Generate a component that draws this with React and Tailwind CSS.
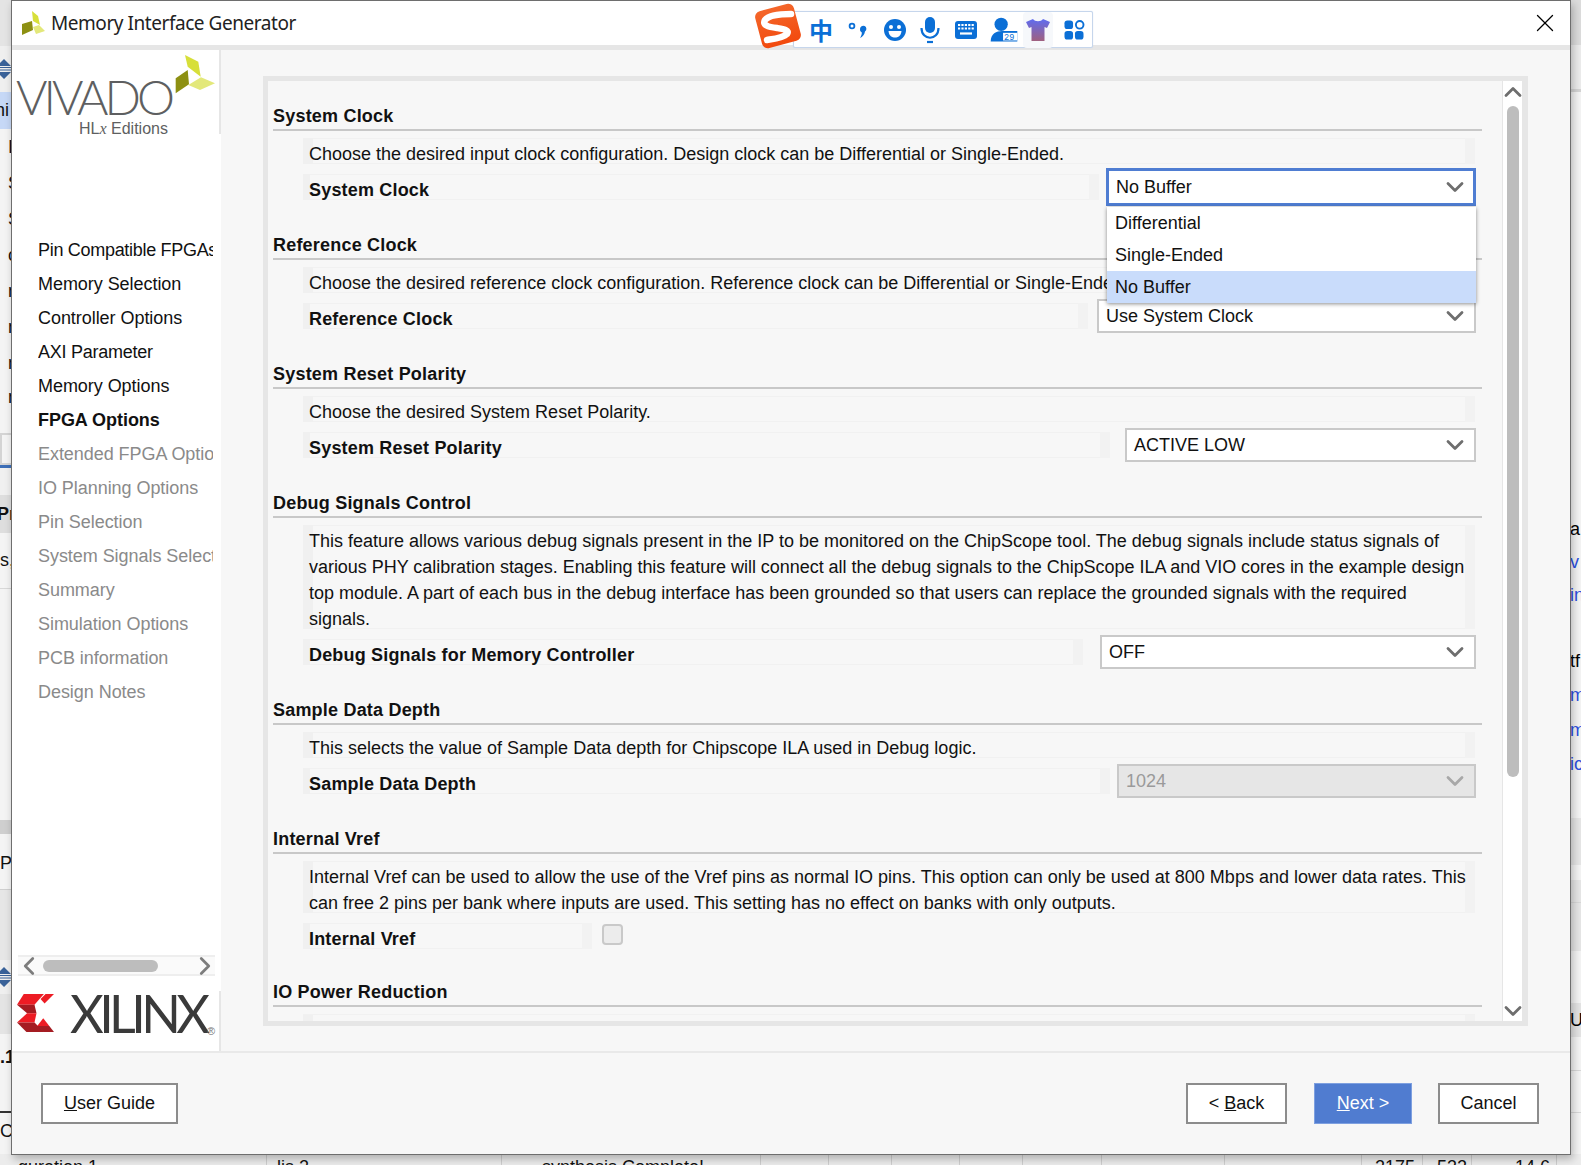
import React from 'react';
import { ChevronDown, ChevronUp, ChevronLeft, ChevronRight, X } from 'lucide-react';

const NAV = [
    ['Pin Compatible FPGAs', 'tracking-[-0.3px]'],
    ['Memory Selection', ''],
    ['Controller Options', ''],
    ['AXI Parameter', 'tracking-[-0.25px]'],
    ['Memory Options', ''],
    ['FPGA Options', 'font-bold'],
    ['Extended FPGA Options', 'text-[#8a8a8a]'],
    ['IO Planning Options', 'text-[#8a8a8a]'],
    ['Pin Selection', 'text-[#8a8a8a]'],
    ['System Signals Selection', 'text-[#8a8a8a]'],
    ['Summary', 'text-[#8a8a8a]'],
    ['Simulation Options', 'text-[#8a8a8a]'],
    ['PCB information', 'text-[#8a8a8a]'],
    ['Design Notes', 'text-[#8a8a8a]'],
];

const LEFT_STRIP = [
    ['h-[46px] bg-[#e4e4e4]', ''],
    ['h-[46px] bg-[#efefef]', '', 'diamond'],
    ['h-[37px] bg-[#c6d8f6] indent-[-5px]', 'hi'],
    ['h-[36px] pl-[8px]', 'I'],
    ['h-[36px] pl-[8px]', 'S'],
    ['h-[36px] pl-[8px]', 'S'],
    ['h-[36px] pl-[8px]', 'c'],
    ['h-[36px] pl-[8px]', 'r'],
    ['h-[36px] pl-[8px]', 'r'],
    ['h-[36px] pl-[8px]', 'r'],
    ['h-[32px] pl-[8px]', 'r'],
    ['h-[20px]', ''],
    ['h-[32px] border-y-2 border-l-2 border-[#d4d4d4]', ''],
    ['h-[3px] bg-[#3d6fb8]', ''],
    ['h-[27px] bg-[#f0f0f0]', ''],
    ['h-[38px] bg-[#dedede] font-bold indent-[-3px]', 'Pr'],
    ['h-[56px] border-b border-[#d8d8d8]', 's,'],
    ['h-[231px]', ''],
    ['h-[14px] bg-[#cfcfcf]', ''],
    ['h-[56px] pt-[4px] border-b border-[#cfcfcf]', 'P'],
    ['h-[70px] bg-[#e6e6e6]', ''],
    ['h-[34px] bg-[#efefef]', '', 'diamond'],
    ['h-[40px] bg-[#e4e4e4]', ''],
    ['h-[46px] font-bold', '.1'],
    ['h-[33px] border-b-2 border-[#333]', ''],
    ['h-[36px]', 'C'],
];

const RIGHT_STRIP = [
    ['h-[45px] bg-[#dcdcdc]', ''],
    ['h-[44px] bg-[#ececec]', ''],
    ['h-[3px] bg-[#d4d4d4]', ''],
    ['h-[420px]', ''],
    ['h-[34px] text-black', 'a'],
    ['h-[32px] text-[#2b4fe0]', 'v'],
    ['h-[34px] text-[#2b4fe0]', 'in'],
    ['h-[32px]', ''],
    ['h-[34px] text-black', 'tf'],
    ['h-[35px] text-[#2b4fe0]', 'm'],
    ['h-[34px] text-[#2b4fe0]', 'm'],
    ['h-[34px] text-[#2b4fe0]', 'ic'],
    ['h-[37px]', ''],
    ['h-[47px] bg-[#e6e6e6]', ''],
    ['h-[15px]', ''],
    ['h-[23px] bg-[#e6e6e6] border-b border-[#d8d8d8]', ''],
    ['h-[48px] bg-[#e6e6e6]', ''],
    ['h-[52px]', ''],
    ['h-[34px] bg-[#e4e4e4] text-black', 'U'],
    ['h-[34px] border-b border-[#d8d8d8]', ''],
    ['h-[42px] border-b border-[#d8d8d8]', ''],
];

const BOTTOM_CELLS = [
    ['w-[267px] pl-[18px]', 'guration 1'],
    ['w-[235px] pl-[10px]', 'lis 2'],
    ['w-[259px] pl-[40px]', 'synthesis Complete!'],
    ['w-[68px]', ''],
    ['w-[63px]', ''],
    ['w-[68px]', ''],
    ['w-[63px]', ''],
    ['w-[79px]', ''],
    ['w-[123px]', ''],
    ['w-[137px]', ''],
    ['w-[61px] pl-[13px]', '2175'],
    ['w-[49px] pl-[14px]', '532'],
    ['w-[85px] pl-[43px]', '14.6'],
];

function Diamond() {
    return (
        <svg width="14" height="20" viewBox="0 0 14 20" className="ml-[-3px]">
            <path d="M7 0 L14 7 H0 Z M0 13 H14 L7 20 Z" fill="#3a6299" />
            <path d="M0 8.5 H14 M0 11 H14" stroke="#3a6299" strokeWidth="1.2" />
        </svg>
    );
}

function Strip({ rows }) {
    return (
        <div className="flex flex-col w-[11px] overflow-hidden">
            {rows.map(([cls, text, extra], i) => (
                <div key={i} className={`${cls} shrink-0 overflow-hidden flex items-center whitespace-nowrap`}>
                    {extra === 'diamond' ? <Diamond /> : text}
                </div>
            ))}
        </div>
    );
}

function VivadoMark() {
    return (
        <svg width="41" height="39" viewBox="0 0 41 39" className="absolute left-[163px] top-[5px]">
            <polygon points="10,0 23.3,6.7 25.7,21.7 12.7,11.7" fill="#d7df3a" />
            <polygon points="12.7,15 14,29.3 0.7,38.3 0.7,23.3" fill="#8d9012" />
            <polygon points="26,22.3 40,28.3 25,35 13.3,30" fill="#e3e87a" />
        </svg>
    );
}

function XilinxMark() {
    return (
        <svg width="37" height="38" viewBox="0 0 110 113" className="shrink-0">
            <polygon points="20,0 80,0 52,32 0,32" fill="#ed1c24" />
            <polygon points="0,32 52,32 58,57 30,57" fill="#a51c22" />
            <polygon points="30,57 58,57 52,85 0,85" fill="#ed1c24" />
            <polygon points="0,85 52,85 80,113 28,113" fill="#a51c22" />
            <polygon points="85,0 110,0 82,28 70,15" fill="#ed1c24" />
            <polygon points="78,72 96,95 60,95" fill="#ed1c24" />
            <polygon points="60,95 96,95 110,113 78,113" fill="#a51c22" />
        </svg>
    );
}

function Sogou() {
    return (
        <div className="absolute left-[793px] top-[11px] w-[300px] h-[37px] bg-white border border-[#c6d6ec] rounded-[2px] flex items-center text-[#0b6fd6] shadow-[0_0_1px_#c6d6ec]">
            <div className="w-[9px] shrink-0" />
            <span className="w-[36px] shrink-0 text-center text-[24px] leading-none font-bold font-['Noto_Sans_CJK_SC',sans-serif]">中</span>
            <svg width="36" height="26" viewBox="0 0 36 26" className="shrink-0 ml-[3px]">
                <circle cx="10" cy="9" r="2.4" fill="none" stroke="#0b6fd6" strokeWidth="1.8" />
                <path d="M18 12 a3.2 3.2 0 1 1 5 2.6 c-0.5 3 -2.5 5.5 -5 6.5 c1 -2 2 -3.5 1.8 -5.6 a3.2 3.2 0 0 1 -1.8 -3.5 z" fill="#0b6fd6" />
            </svg>
            <svg width="36" height="26" viewBox="0 0 26 26" className="shrink-0 -ml-[1px]">
                <circle cx="13" cy="13" r="11" fill="#0b6fd6" />
                <circle cx="9" cy="10" r="2" fill="#fff" />
                <circle cx="17" cy="10" r="2" fill="#fff" />
                <path d="M6.5 14 H19.5 C19 19 16 20.5 13 20.5 C10 20.5 7 19 6.5 14 Z" fill="#fff" />
            </svg>
            <svg width="36" height="28" viewBox="0 0 36 28" className="shrink-0 -ml-[1px]">
                <rect x="13" y="1" width="10" height="16" rx="5" fill="#0b6fd6" />
                <path d="M9.5 12 C9.5 25 26.5 25 26.5 12" fill="none" stroke="#0b6fd6" strokeWidth="2.2" />
                <path d="M15 26 H21" stroke="#0b6fd6" strokeWidth="2.2" />
            </svg>
            <svg width="38" height="24" viewBox="0 0 38 24" className="shrink-0 -ml-[1px]">
                <rect x="8" y="3" width="22" height="18" rx="3" fill="#0b6fd6" />
                <path d="M11 7 H27 M11 10.5 H27" stroke="#fff" strokeWidth="2" strokeDasharray="2.2 1.2" />
                <path d="M13 15.5 H25" stroke="#fff" strokeWidth="2.2" />
            </svg>
            <svg width="38" height="30" viewBox="0 0 40 30" className="shrink-0">
                <circle cx="17" cy="9" r="7" fill="#0b6fd6" />
                <path d="M6 27 C6 19 12 16 18 16 H34 V27 Z" fill="#0b6fd6" />
                <rect x="19" y="18" width="15" height="8" fill="#fff" />
                <text x="20" y="25.5" fontSize="9" fontFamily="Liberation Mono, monospace" fill="#0b6fd6">29</text>
            </svg>
            <div className="w-[30px] h-[36px] shrink-0 flex items-center justify-center bg-[#f6f8fb] rounded-[4px]">
                <svg width="24" height="22" viewBox="0 0 24 22">
                    <defs>
                        <linearGradient id="shirt" x1="0" y1="0" x2="0" y2="1">
                            <stop offset="0" stopColor="#5f6cf0" />
                            <stop offset="1" stopColor="#a0607f" />
                        </linearGradient>
                    </defs>
                    <path d="M7 0 C9 3 15 3 17 0 L24 3 L21 9 L18.5 8 V22 H5.5 V8 L3 9 L0 3 Z" fill="url(#shirt)" />
                </svg>
            </div>
            <svg width="38" height="24" viewBox="0 0 40 24" className="shrink-0 ml-[2px]">
                <rect x="10" y="2" width="9" height="9" rx="3" fill="#0b6fd6" />
                <rect x="22" y="2.5" width="8" height="8" rx="4" fill="none" stroke="#0b6fd6" strokeWidth="2" />
                <rect x="10" y="13" width="9" height="9" rx="3" fill="#0b6fd6" />
                <rect x="21" y="13" width="9" height="9" rx="3" fill="#0b6fd6" />
            </svg>
        </div>
    );
}

function SogouLogo() {
    return (
        <svg width="52" height="50" viewBox="0 0 52 50" className="absolute left-[753px] top-[1px]">
            <defs>
                <linearGradient id="sg" x1="0" y1="0" x2="0" y2="1">
                    <stop offset="0" stopColor="#f4662a" />
                    <stop offset="1" stopColor="#f24a0e" />
                </linearGradient>
            </defs>
            <rect x="5" y="6" width="40" height="38" rx="6" fill="url(#sg)" transform="rotate(-15 25 25)" />
            <path d="M38 13 C28 13 16 14 12 19 C9 24 15 26 24 27 C30 28 37 29 34 33 C30 37 20 38 14 39" fill="none" stroke="#fff" strokeWidth="6.5" strokeLinecap="round" />
        </svg>
    );
}

function Select({ value, width, disabled }) {
    return (
        <div className={`${width} h-[34px] -my-[4px] shrink-0 flex items-center justify-between pl-[7px] pr-[5px] border-2 border-[#c9c9c9] ${disabled ? 'bg-[#e6e6e6] text-[#9a9a9a]' : 'bg-white'}`}>
            <span>{value}</span>
            <ChevronDown size={28} strokeWidth={2.4} className={disabled ? 'text-[#a8a8a8]' : 'text-[#6e6e6e]'} />
        </div>
    );
}

function Row({ className, swatch, children }) {
    return (
        <div className={`relative flex-1 min-w-0 shadow-[inset_0_1px_0_#f1f1f1,inset_0_-1px_0_#f1f1f1] ${className}`}>
            <div className={`absolute left-0 inset-y-0 ${swatch} bg-[#f0f0f0]`} />
            <div className="absolute right-0 inset-y-0 w-[10px] bg-[#f2f2f2]" />
            {children}
        </div>
    );
}

function Section({ title, desc, label, control, gap }) {
    return (
        <section className="pb-[30px]">
            <h3 className="h-[30px] border-b-2 border-[#c8c8c8] font-bold leading-[30px] tracking-[0.2px] mr-[20px]">{title}</h3>
            <div className="ml-[30px] mr-[27px] mt-[7px] flex">
                <Row swatch="w-[10px]" className="pl-[6px] leading-[26px]">
                    {desc.map((line, i) => <div key={i} className="relative top-[3px] whitespace-nowrap h-[26px]">{line}</div>)}
                </Row>
            </div>
            <div className={`ml-[30px] mr-[26px] mt-[10px] flex items-center ${gap}`}>
                <Row swatch="w-[7px]" className="pl-[6px] h-[26px] leading-[33px] font-bold tracking-[0.18px]">
                    <span className="relative">{label}</span>
                </Row>
                {control}
            </div>
        </section>
    );
}

function Btn({ className = '', children }) {
    return (
        <div className={`h-[41px] flex items-center justify-center border-2 border-[#8c8c8c] bg-white ${className}`}>
            {children}
        </div>
    );
}

export default function App() {
    return (
        <div className="relative w-[1581px] h-[1165px] overflow-hidden bg-[#f4f4f4] text-[18px] text-[#111] font-['Liberation_Sans',Arial,sans-serif]">
            {/* window behind the dialog */}
            <div className="absolute inset-0 flex justify-between">
                <Strip rows={LEFT_STRIP} />
                <Strip rows={RIGHT_STRIP} />
            </div>
            <div className="absolute left-0 right-0 bottom-0 h-[11px] flex bg-[#ececec] overflow-hidden">
                {BOTTOM_CELLS.map(([w, t], i) => (
                    <div key={i} className={`${w} shrink-0 border-r border-[#cfcfcf] leading-[27px] whitespace-nowrap`}>{t}</div>
                ))}
            </div>

            {/* dialog */}
            <div className="absolute left-[11px] top-0 w-[1560px] h-[1155px] flex flex-col bg-[#f7f7f7] border border-[#6e6e6e] shadow-[2px_4px_8px_rgba(0,0,0,0.25)]">
                <div className="h-[44px] shrink-0 bg-white flex items-center pl-[9px] pr-[10px] text-[19px] tracking-[-0.45px] text-[#222] font-['Noto_Sans',sans-serif]">
                    <svg width="24" height="24" viewBox="0 0 24 24" className="shrink-0">
                        <polygon points="11,0 17,5 19,14 12,10" fill="#d7df3a" />
                        <polygon points="1,13 11,10 12,19 1,24" fill="#8d9012" />
                        <polygon points="12,16 18,14 24,20 15,23" fill="#e3e87a" />
                    </svg>
                    <span className="ml-[6px] flex-1">Memory Interface Generator</span>
                    <X size={30} strokeWidth={1} className="text-black" />
                </div>
                <div className="h-[5px] shrink-0 bg-[#e6e6e6]" />

                <div className="flex-1 min-h-0 flex">
                    {/* wizard sidebar */}
                    <aside className="w-[209px] shrink-0 bg-white flex flex-col">
                        <div className="relative h-[84px] shrink-0 border-r-2 border-[#e6e6e6] overflow-visible">
                            <span className="absolute left-[4px] top-[19px] text-[48px] leading-[56px] tracking-[-4px] font-light text-[#5e5f61] font-['Lato',sans-serif]">VIVADO</span>
                            <VivadoMark />
                            <span className="absolute left-[67px] top-[69px] text-[16px] leading-[20px] text-[#5e5f61]">HL<i className="font-['Liberation_Serif',serif]">x</i> Editions</span>
                        </div>
                        <nav className="flex-1 min-h-0 pt-[99px] pl-[26px] pr-[8px] overflow-hidden tracking-[-0.05px]">
                            {NAV.map(([name, cls]) => (
                                <div key={name} className={`h-[34px] leading-[34px] whitespace-nowrap overflow-hidden ${cls}`}>{name}</div>
                            ))}
                        </nav>
                        <div className="h-[21px] shrink-0 mx-[6px] flex items-center bg-[#fafafa] border-y-2 border-[#eeeeee] text-[#7d7d7d]">
                            <ChevronLeft size={30} strokeWidth={2.2} className="-ml-[4px] -my-[6px] shrink-0" />
                            <div className="w-[115px] h-[12px] -ml-[1px] mr-auto rounded-full bg-[#bdbdbd]" />
                            <ChevronRight size={30} strokeWidth={2.2} className="-mr-[5px] -my-[6px] shrink-0" />
                        </div>
                        <div className="h-[75px] shrink-0 flex">
                            <div className="flex-1 flex items-center pl-[5px] pb-[2px] relative">
                                <XilinxMark />
                                <span className="ml-[16px] text-[52px] leading-none tracking-[-4.6px] text-[#3a3a3a] font-['Lato',sans-serif]">XILINX</span>
                                <span className="absolute right-[4px] top-[47px] text-[11px] text-[#777]">®</span>
                            </div>
                            <div className="w-[2px] mt-[15px] bg-[#e6e6e6]" />
                        </div>
                    </aside>

                    <div className="flex-1 min-w-0 flex flex-col">
                        <div className="flex-1 min-h-0 ml-[42px] mr-[42px] mt-[26px] mb-[25px] flex border-[5px] border-r-[6px] border-[#e6e6e6] bg-[#f7f7f7]">
                            <div className="flex-1 min-w-0 overflow-hidden pt-[20px] pl-[5px]">
                                <Section title="System Clock" desc={['Choose the desired input clock configuration. Design clock can be Differential or Single-Ended.']} label="System Clock" gap="gap-[7px]" control={
                                    <div className="w-[370px] h-[38px] -my-[6px] shrink-0 flex items-center justify-between pl-[7px] pr-[4px] border-[3px] border-[#4f7dd2] bg-white">
                                        <span>No Buffer</span>
                                        <ChevronDown size={28} strokeWidth={2.4} className="text-[#6e6e6e]" />
                                    </div>
                                } />
                                <Section title="Reference Clock" desc={['Choose the desired reference clock configuration. Reference clock can be Differential or Single-Ended.']} label="Reference Clock" gap="gap-[9px]" control={<Select value="Use System Clock" width="w-[379px]" />} />
                                <Section title="System Reset Polarity" desc={['Choose the desired System Reset Polarity.']} label="System Reset Polarity" gap="gap-[15px]" control={<Select value="ACTIVE LOW" width="w-[351px]" />} />
                                <Section title="Debug Signals Control" desc={[
                                    'This feature allows various debug signals present in the IP to be monitored on the ChipScope tool. The debug signals include status signals of',
                                    <span className="tracking-[-0.035px]">various PHY calibration stages. Enabling this feature will connect all the debug signals to the ChipScope ILA and VIO cores in the example design</span>,
                                    'top module. A part of each bus in the debug interface has been grounded so that users can replace the grounded signals with the required',
                                    'signals.',
                                ]} label="Debug Signals for Memory Controller" gap="gap-[17px]" control={<Select value="OFF" width="w-[376px]" />} />
                                <Section title="Sample Data Depth" desc={['This selects the value of Sample Data depth for Chipscope ILA used in Debug logic.']} label="Sample Data Depth" gap="gap-[7px]" control={<Select value="1024" width="w-[359px]" disabled />} />
                                <Section title="Internal Vref" desc={[
                                    'Internal Vref can be used to allow the use of the Vref pins as normal IO pins. This option can only be used at 800 Mbps and lower data rates. This',
                                    'can free 2 pins per bank where inputs are used. This setting has no effect on banks with only outputs.',
                                ]} label="Internal Vref" gap="gap-[8px]" control={
                                    <div className="w-[876px] shrink-0 flex items-center -my-[4px] h-[34px]">
                                        <div className="w-[21px] h-[21px] ml-[2px] -mt-[3px] rounded-[4px] border-2 border-[#c9c9c9] bg-[#ececec]" />
                                    </div>
                                } />
                                <h3 className="h-[30px] -mt-[2px] border-b-2 border-[#c8c8c8] font-bold leading-[30px] tracking-[0.2px] mr-[20px]">IO Power Reduction</h3>
                                <div className="ml-[30px] mr-[27px] mt-[7px] h-[20px] border-t border-[#f1f1f1] flex justify-between">
                                    <div className="w-[10px] bg-[#f0f0f0]" />
                                    <div className="w-[10px] bg-[#f2f2f2]" />
                                </div>
                            </div>
                            <div className="w-[20px] shrink-0 bg-white border-l border-[#e6e6e6] flex flex-col items-center text-[#6e6e6e]">
                                <ChevronUp size={28} strokeWidth={2.4} className="-mt-[3px] shrink-0" />
                                <div className="w-[12px] h-[671px] shrink-0 rounded-full bg-[#bdbdbd]" />
                                <ChevronDown size={28} strokeWidth={2.4} className="mt-auto -mb-[4px] shrink-0" />
                            </div>
                        </div>
                    </div>
                </div>

                <div className="h-[103px] shrink-0 border-t-2 border-[#e9e9e9] flex items-center justify-between pl-[29px] pr-[31px]">
                    <Btn className="w-[137px]"><span><u>U</u>ser Guide</span></Btn>
                    <div className="flex">
                        <Btn className="w-[101px]"><span>&lt; <u>B</u>ack</span></Btn>
                        <div className="w-[98px] h-[41px] ml-[27px] flex items-center justify-center bg-[#507cd0] border border-[#7ea0e0] text-white"><span><u>N</u>ext &gt;</span></div>
                        <Btn className="w-[101px] ml-[26px]">Cancel</Btn>
                    </div>
                </div>
            </div>

            {/* open combo list, over the form */}
            <div className="absolute left-[1107px] top-[207px] w-[369px] bg-white shadow-[0_1px_4px_rgba(0,0,0,0.45)]">
                <div className="h-[32px] leading-[32px] pl-[8px]">Differential</div>
                <div className="h-[32px] leading-[32px] pl-[8px]">Single-Ended</div>
                <div className="h-[32px] leading-[32px] pl-[8px] bg-[#c9dcfb]">No Buffer</div>
            </div>

            <Sogou />
            <SogouLogo />
        </div>
    );
}
